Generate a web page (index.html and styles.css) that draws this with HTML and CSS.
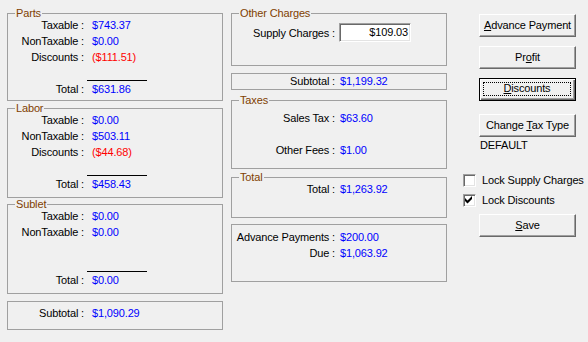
FILE: index.html
```html
<!DOCTYPE html>
<html>
<head>
<meta charset="utf-8">
<link rel="stylesheet" href="styles.css">
</head>
<body>
<div class="page">
  <div class="col col-left">
    <div class="group grp-parts">
      <span class="legend">Parts</span>
      <div class="rows">
        <div class="row"><span class="lbl">Taxable :</span><span class="val">$743.37</span></div>
        <div class="row"><span class="lbl">NonTaxable :</span><span class="val">$0.00</span></div>
        <div class="row"><span class="lbl">Discounts :</span><span class="neg">($111.51)</span></div>
      </div>
      <div class="sumline"></div>
      <div class="row"><span class="lbl">Total :</span><span class="val">$631.86</span></div>
    </div>
    <div class="group grp-labor">
      <span class="legend">Labor</span>
      <div class="rows">
        <div class="row"><span class="lbl">Taxable :</span><span class="val">$0.00</span></div>
        <div class="row"><span class="lbl">NonTaxable :</span><span class="val">$503.11</span></div>
        <div class="row"><span class="lbl">Discounts :</span><span class="neg">($44.68)</span></div>
      </div>
      <div class="sumline"></div>
      <div class="row"><span class="lbl">Total :</span><span class="val">$458.43</span></div>
    </div>
    <div class="group grp-sublet">
      <span class="legend">Sublet</span>
      <div class="rows">
        <div class="row"><span class="lbl">Taxable :</span><span class="val">$0.00</span></div>
        <div class="row"><span class="lbl">NonTaxable :</span><span class="val">$0.00</span></div>
      </div>
      <div class="sumline"></div>
      <div class="row"><span class="lbl">Total :</span><span class="val">$0.00</span></div>
    </div>
    <div class="group grp-lsub">
      <div class="row"><span class="lbl">Subtotal :</span><span class="val">$1,090.29</span></div>
    </div>
  </div>

  <div class="col col-mid">
    <div class="group grp-other">
      <span class="legend">Other Charges</span>
      <div class="mrow supply"><span class="lbl">Supply Charges :</span><span class="input">$109.03</span></div>
    </div>
    <div class="group grp-msub">
      <div class="mrow"><span class="lbl">Subtotal :</span><span class="val">$1,199.32</span></div>
    </div>
    <div class="group grp-taxes">
      <span class="legend">Taxes</span>
      <div class="mrow tax1"><span class="lbl">Sales Tax :</span><span class="val">$63.60</span></div>
      <div class="mrow tax2"><span class="lbl">Other Fees :</span><span class="val">$1.00</span></div>
    </div>
    <div class="group grp-total">
      <span class="legend">Total</span>
      <div class="mrow tot"><span class="lbl">Total :</span><span class="val">$1,263.92</span></div>
    </div>
    <div class="group grp-adv">
      <div class="mrow"><span class="lbl">Advance Payments :</span><span class="val">$200.00</span></div>
      <div class="mrow"><span class="lbl">Due :</span><span class="val">$1,063.92</span></div>
    </div>
  </div>

  <div class="col col-right">
    <div class="btn b-adv"><span class="cap"><u>A</u>dvance Payment</span></div>
    <div class="btn b-profit"><span class="cap">Pr<u>o</u>fit</span></div>
    <div class="btn default b-disc"><span class="cap"><u>D</u>iscounts</span></div>
    <div class="btn b-tax"><span class="cap">Change <u>T</u>ax Type</span></div>
    <div class="taxtype">DEFAULT</div>
    <div class="check c1"><span class="cb"></span><span class="ctext">Lock Supply Charges</span></div>
    <div class="check c2"><span class="cb"><svg width="11" height="11" viewBox="0 0 11 11"><polygon points="2,4 4.5,6.5 9,2 9,5 4.5,9.5 2,7" fill="#000"/></svg></span><span class="ctext">Lock Discounts</span></div>
    <div class="btn b-save"><span class="cap"><u>S</u>ave</span></div>
  </div>
</div>
</body>
</html>
```
FILE: styles.css
```css
html, body {
  margin: 0;
  padding: 0;
}
body {
  width: 588px;
  height: 342px;
  background: #f0f0f0;
  font-family: "Liberation Sans", Arial, sans-serif;
  font-size: 11px;
  letter-spacing: -0.15px;
  color: #000;
  overflow: hidden;
}
.page {
  display: flex;
  padding-left: 7px;
}
.col-left {
  width: 216px;
  padding-top: 13px;
}
.col-mid {
  width: 216px;
  margin-left: 8px;
  padding-top: 13px;
}
.col-right {
  margin-left: 16px;
  padding-top: 14px;
  width: 125px;
}
.group {
  box-sizing: border-box;
  border: 1px solid #a0a0a0;
}
.legend {
  display: block;
  width: max-content;
  height: 13px;
  line-height: 13px;
  margin: -7px 0 -6px 7px;
  padding: 0 1px;
  background: #f0f0f0;
  color: #804000;
}
.grp-parts { height: 88px; }
.grp-labor { height: 90px; margin-top: 7px; }
.grp-sublet { height: 90px; margin-top: 6px; }
.grp-lsub { height: 29px; margin-top: 7px; padding-top: 3px; }
.rows {
  height: 63px;
  padding-top: 3px;
}
.row {
  display: grid;
  grid-template-columns: 76px auto;
  column-gap: 8px;
  line-height: 16px;
}
.lbl {
  text-align: right;
  white-space: nowrap;
}
.val { color: #0000ff; white-space: nowrap; }
.neg { color: #ff0000; white-space: nowrap; }
.sumline {
  margin-left: 79px;
  width: 60px;
  height: 1px;
  background: #000;
}
.mrow {
  display: grid;
  grid-template-columns: 103px auto;
  column-gap: 5px;
  line-height: 16px;
  align-items: center;
}
.grp-other { height: 53px; }
.supply {
  margin-top: 9px;
  column-gap: 4px;
}
.input {
  box-sizing: border-box;
  width: 72px;
  height: 19px;
  line-height: 15px;
  padding: 1px 2px 0 0;
  text-align: right;
  background: #fff;
  border: 1px solid;
  border-color: #a0a0a0 #fff #fff #a0a0a0;
  box-shadow: inset 1px 1px #696969, inset -1px -1px #e3e3e3;
}
.grp-msub {
  height: 17px;
  margin-top: 7px;
}
.grp-msub .mrow { line-height: 14px; }
.grp-taxes { height: 69px; margin-top: 10px; }
.tax1 { margin-top: 9px; }
.tax2 { margin-top: 16px; }
.grp-total { height: 41px; margin-top: 8px; }
.tot { margin-top: 3px; }
.grp-adv { height: 58px; margin-top: 6px; padding-top: 4px; }

.btn {
  box-sizing: border-box;
  width: 97px;
  height: 23px;
  margin-left: 16px;
  display: flex;
  align-items: center;
  justify-content: center;
  border: 1px solid;
  border-color: #fff #696969 #696969 #fff;
  box-shadow: inset -1px -1px #a0a0a0;
  background: #f0f0f0;
}
.btn.default {
  border-color: #000;
  box-shadow: inset 1px 1px #fff, inset -1px -1px #696969, inset -2px -2px #a0a0a0;
  padding: 3px 4px 4px 3px;
}
.btn.default .cap {
  align-self: stretch;
  flex: 1;
  border: 1px dotted #000;
  text-align: center;
  line-height: 11px;
}
.cap { white-space: nowrap; line-height: 13px; }
.b-profit { margin-top: 9px; }
.b-disc { margin-top: 9px; }
.b-tax { margin-top: 13px; }
.taxtype {
  margin: 2px 0 0 17px;
  line-height: 13px;
}
.check {
  display: flex;
  align-items: center;
  height: 13px;
}
.c1 { margin-top: 22px; }
.c2 { margin-top: 7px; }
.cb {
  box-sizing: border-box;
  width: 13px;
  height: 13px;
  flex: none;
  background: #fff;
  border: 1px solid;
  border-color: #a0a0a0 #fff #fff #a0a0a0;
  box-shadow: inset 1px 1px #696969, inset -1px -1px #e3e3e3;
}
.cb svg { display: block; margin: -1px 0 0 -1px; }
.ctext {
  margin-left: 6px;
  line-height: 13px;
  white-space: nowrap;
}
.b-save { margin-top: 7px; }
```
